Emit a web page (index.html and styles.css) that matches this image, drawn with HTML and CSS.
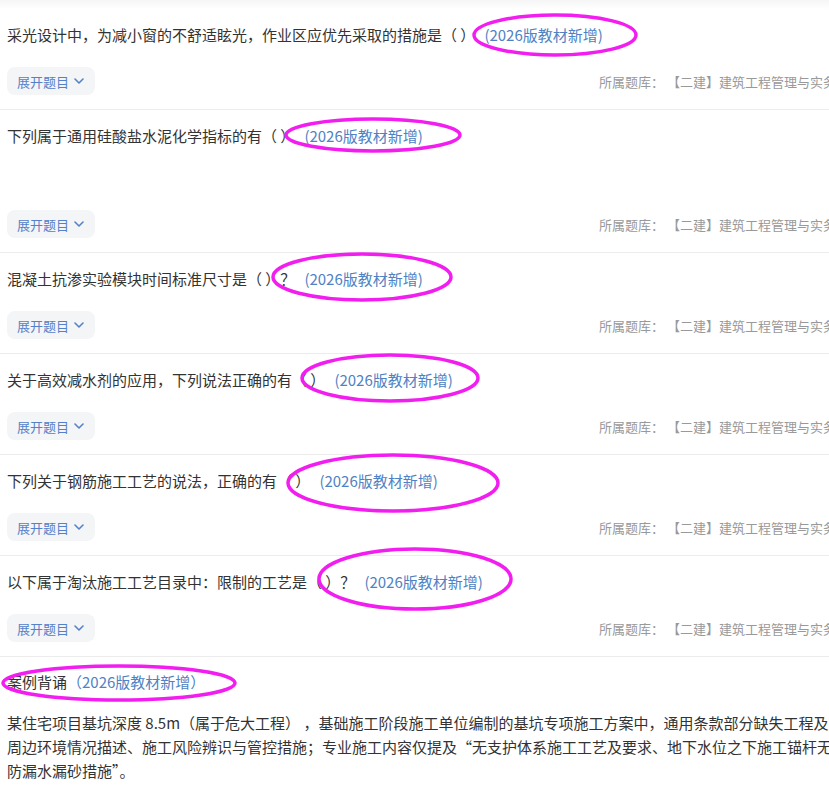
FILE: index.html
```html
<!DOCTYPE html>
<html lang="zh-CN">
  <head>
    <title>题目列表</title>
    <meta charset="utf-8">
    <link rel="stylesheet" href="styles.css">
  </head>
  <body>

  <div class="page">
    <div class="topbar"></div>

    <ul class="list">
      <li class="item">
        <div class="q">采光设计中，为减小窗的不舒适眩光，作业区应优先采取的措施是（ ）<span class="tag">(2026版教材新增)</span></div>
        <div class="foot">
          <button class="expand">展开题目<svg width="10" height="6" viewBox="0 0 10 6"><path d="M1 1l4 4 4-4"/></svg></button>
          <span class="meta">所属题库： 【二建】建筑工程管理与实务</span>
        </div>
      </li>
      <li class="item">
        <div class="q">下列属于通用硅酸盐水泥化学指标的有（ ）<span class="tag">(2026版教材新增)</span></div>
        <div class="q-blank"></div>
        <div class="foot">
          <button class="expand">展开题目<svg width="10" height="6" viewBox="0 0 10 6"><path d="M1 1l4 4 4-4"/></svg></button>
          <span class="meta">所属题库： 【二建】建筑工程管理与实务</span>
        </div>
      </li>
      <li class="item">
        <div class="q">混凝土抗渗实验模块时间标准尺寸是（ ）？<span class="tag">(2026版教材新增)</span></div>
        <div class="foot">
          <button class="expand">展开题目<svg width="10" height="6" viewBox="0 0 10 6"><path d="M1 1l4 4 4-4"/></svg></button>
          <span class="meta">所属题库： 【二建】建筑工程管理与实务</span>
        </div>
      </li>
      <li class="item">
        <div class="q">关于高效减水剂的应用，下列说法正确的有（ ）<span class="tag">(2026版教材新增)</span></div>
        <div class="foot">
          <button class="expand">展开题目<svg width="10" height="6" viewBox="0 0 10 6"><path d="M1 1l4 4 4-4"/></svg></button>
          <span class="meta">所属题库： 【二建】建筑工程管理与实务</span>
        </div>
      </li>
      <li class="item">
        <div class="q">下列关于钢筋施工工艺的说法，正确的有（ ）<span class="tag">(2026版教材新增)</span></div>
        <div class="foot">
          <button class="expand">展开题目<svg width="10" height="6" viewBox="0 0 10 6"><path d="M1 1l4 4 4-4"/></svg></button>
          <span class="meta">所属题库： 【二建】建筑工程管理与实务</span>
        </div>
      </li>
      <li class="item">
        <div class="q">以下属于淘汰施工工艺目录中：限制的工艺是（ ）？<span class="tag">(2026版教材新增)</span></div>
        <div class="foot">
          <button class="expand">展开题目<svg width="10" height="6" viewBox="0 0 10 6"><path d="M1 1l4 4 4-4"/></svg></button>
          <span class="meta">所属题库： 【二建】建筑工程管理与实务</span>
        </div>
      </li>
    </ul>

    <div class="case">
      <div class="case-title">案例背诵<span class="tag-full">（2026版教材新增）</span></div>
      <p class="case-text">某住宅项目基坑深度 8.5m（属于危大工程） ，基础施工阶段施工单位编制的基坑专项施工方案中，通用条款部分缺失工程及周边环境情况描述、施工风险辨识与管控措施；专业施工内容仅提及“无支护体系施工工艺及要求、地下水位之下施工锚杆无防漏水漏砂措施”。</p>
    </div>
  </div>

  <!-- annotation rings drawn over the screenshot -->
  <svg class="marks" width="829" height="787" viewBox="0 0 829 787">
    <ellipse cx="555" cy="35" rx="81" ry="20"/>
    <ellipse cx="373" cy="135" rx="87" ry="16"/>
    <ellipse cx="362" cy="277" rx="89" ry="23"/>
    <ellipse cx="390" cy="378" rx="88" ry="23"/>
    <ellipse cx="393" cy="483" rx="105" ry="28"/>
    <ellipse cx="415" cy="579" rx="96" ry="30"/>
    <ellipse cx="119" cy="683" rx="116" ry="17"/>
  </svg>

  </body>
</html>
```

FILE: styles.css
```css
html, body {
  margin: 0;
  padding: 0;
  overflow: hidden;
  background: #ffffff;
}
body {
  font-family: "Noto Sans CJK SC", "Microsoft YaHei", sans-serif;
  color: #333333;
  font-size: 15px;
  position: relative;
}

.page {
  width: 843px;
}

.topbar {
  height: 9px;
  background: linear-gradient(#f6f6f6, #ffffff);
}

.list {
  list-style: none;
  margin: 0;
  padding: 0;
}

.item {
  padding: 14px 7px;
  border-bottom: 1px solid #ececec;
}

.q {
  line-height: 24px;
  margin-bottom: 20px;
  white-space: nowrap;
}

.q-blank {
  height: 42px;
}

.tag {
  color: #4f82c4;
  margin-left: 9px;
}
.tag-full {
  color: #4f82c4;
}

.foot {
  display: flex;
  align-items: center;
  height: 28px;
}

.expand {
  display: flex;
  align-items: center;
  gap: 5px;
  height: 28px;
  padding: 0 11px 0 10px;
  border: none;
  border-radius: 8px;
  background: #f4f5f7;
  color: #5581c8;
  font-family: inherit;
  font-size: 13px;
  cursor: pointer;
}
.expand svg path {
  fill: none;
  stroke: currentColor;
  stroke-width: 1.6;
  stroke-linecap: round;
  stroke-linejoin: round;
}

.meta {
  margin-left: auto;
  white-space: nowrap;
  font-size: 13px;
  color: #999999;
}

.case {
  padding: 13px 7px;
}
.case-title {
  line-height: 24px;
}
.case-text {
  margin: 17px 0 0;
  padding-right: 3px;
  line-height: 24px;
}

.marks {
  position: absolute;
  top: 0;
  left: 0;
  pointer-events: none;
}
.marks ellipse {
  fill: none;
  stroke: #f21ef0;
  stroke-width: 3.5;
}
```
